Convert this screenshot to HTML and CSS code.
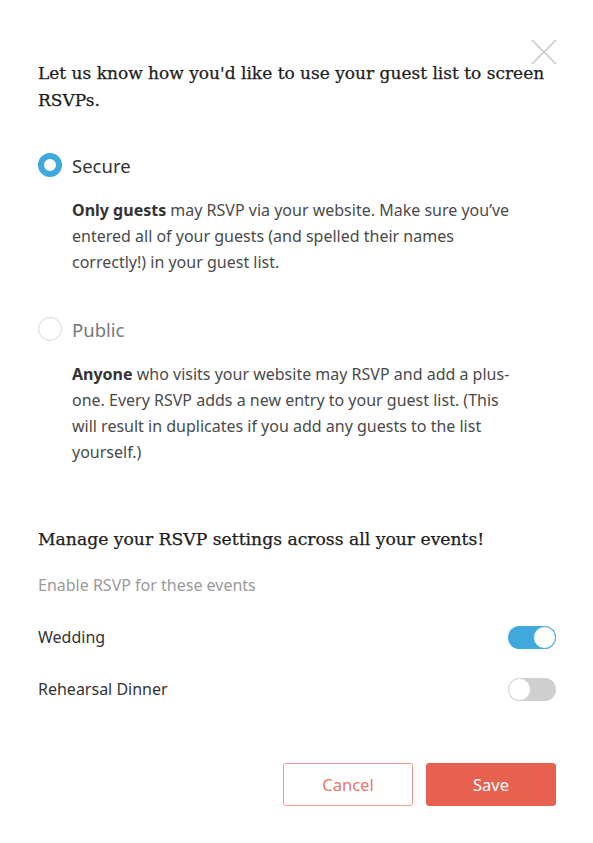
FILE: index.html
```html
<!DOCTYPE html>
<html lang="en">
<head>
    <meta charset="UTF-8">
    <meta name="viewport" content="width=device-width, initial-scale=1.0">
    <title>RSVP Settings</title>
    <link rel="stylesheet" href="styles.css">
</head>
<body>
    <div class="modal">
        <button type="button" class="close-btn" aria-label="Close">
            <svg width="26" height="26" viewBox="0 0 26 26">
                <path d="M1 1 L25 25 M25 1 L1 25" stroke="#c8c8c8" stroke-width="1.6" fill="none"/>
            </svg>
        </button>

        <h2 class="title">Let us know how you'd like to use your guest list to screen RSVPs.</h2>

        <div class="option">
            <label class="option-row">
                <span class="radio checked"></span>
                <span class="option-label">Secure</span>
            </label>
            <p class="option-desc"><strong>Only guests</strong> may RSVP via your website. Make sure you’ve entered all of your guests (and spelled their names correctly!) in your guest list.</p>
        </div>

        <div class="option">
            <label class="option-row">
                <span class="radio"></span>
                <span class="option-label muted">Public</span>
            </label>
            <p class="option-desc"><strong>Anyone</strong> who visits your website may RSVP and add a plus-one. Every RSVP adds a new entry to your guest list. (This will result in duplicates if you add any guests to the list yourself.)</p>
        </div>

        <h3 class="subtitle">Manage your RSVP settings across all your events!</h3>
        <p class="hint">Enable RSVP for these events</p>

        <div class="event-row">
            <span>Wedding</span>
            <span class="toggle on"><span class="knob"></span></span>
        </div>
        <div class="event-row">
            <span>Rehearsal Dinner</span>
            <span class="toggle"><span class="knob"></span></span>
        </div>

        <div class="actions">
            <button type="button" class="btn btn-outline">Cancel</button>
            <button type="button" class="btn btn-primary">Save</button>
        </div>
    </div>
</body>
</html>
```

FILE: styles.css
```css
body {
    margin: 0;
    background: #fff;
    font-family: "Noto Sans", Lato, sans-serif;
    color: #3b3b3b;
}

.modal {
    position: relative;
    padding: 60px 37px 37px 38px;
}

.close-btn {
    position: absolute;
    top: 39px;
    right: 36px;
    padding: 0;
    border: none;
    background: none;
    cursor: pointer;
    line-height: 0;
}

.title {
    margin: 0;
    font-family: "DejaVu Serif", serif;
    font-size: 17px;
    font-weight: normal;
    line-height: 27px;
    color: #1c1c1c;
    -webkit-text-stroke: 0.25px #1c1c1c;
}

.option {
    margin-top: 39px;
}

.option + .option {
    margin-top: 42px;
}

.option-row {
    display: flex;
    align-items: center;
    gap: 10px;
    height: 24px;
}

.radio {
    box-sizing: border-box;
    width: 24px;
    height: 24px;
    border-radius: 50%;
    border: 1.5px solid #d6d6d6;
    background: #fff;
}

.radio.checked {
    border: 6px solid #3fa8dc;
}

.option-label {
    font-size: 18.5px;
    color: #333;
}

.option-label.muted {
    color: #777;
}

.option-desc {
    max-width: 452px;
    margin: 20px 0 0 34px;
    font-size: 16px;
    line-height: 26px;
    color: #4a4a4a;
}

.option-desc strong {
    font-weight: 700;
    color: #333;
}

.subtitle {
    margin: 60px 0 0;
    font-family: "DejaVu Serif", serif;
    font-size: 17.2px;
    font-weight: normal;
    line-height: 28px;
    color: #1c1c1c;
    -webkit-text-stroke: 0.25px #1c1c1c;
}

.hint {
    margin: 20px 0 0;
    font-size: 16px;
    line-height: 24px;
    color: #9a9a9a;
}

.event-row {
    display: flex;
    justify-content: space-between;
    align-items: center;
    height: 24px;
    margin-top: 28px;
    font-size: 16px;
    color: #333;
}

.toggle {
    position: relative;
    box-sizing: border-box;
    width: 48px;
    height: 23px;
    border-radius: 12px;
    background: #cfcfcf;
}

.toggle .knob {
    position: absolute;
    top: 0;
    left: 0;
    box-sizing: border-box;
    width: 23px;
    height: 23px;
    border-radius: 50%;
    background: #fff;
    border: 1px solid #d4d4d4;
}

.toggle.on {
    background: #3fa8dc;
}

.toggle.on .knob {
    left: auto;
    right: 0;
    border: 1.5px solid #3fa8dc;
}

.actions {
    display: flex;
    justify-content: flex-end;
    gap: 13px;
    margin-top: 62px;
}

.btn {
    width: 130px;
    height: 43px;
    border-radius: 3px;
    font-family: "Noto Sans", Lato, sans-serif;
    font-size: 16.5px;
    cursor: pointer;
}

.btn-outline {
    background: #fff;
    border: 1px solid #f19b91;
    color: #e8776a;
}

.btn-primary {
    background: #e8604f;
    border: 1px solid #e8604f;
    color: #fff;
}
```
